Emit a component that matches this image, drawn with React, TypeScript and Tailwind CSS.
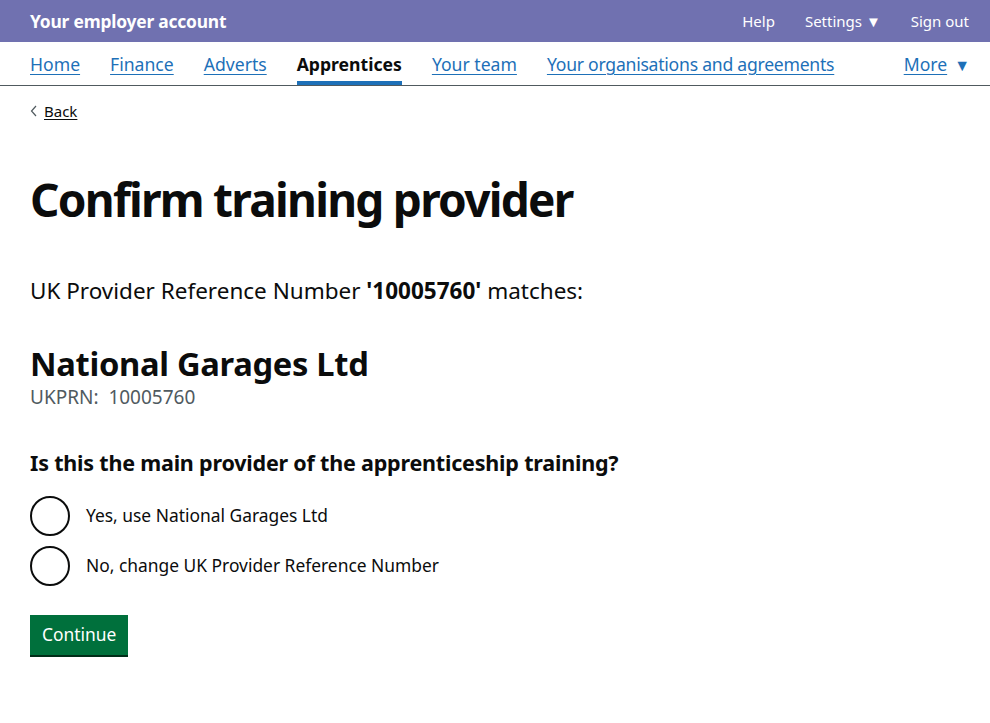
import React from "react";

export default function App() {
  const font = { fontFamily: '"Noto Sans", Arial, sans-serif' };
  return (
    <div className="min-h-screen bg-white text-[#0b0c0c]" style={font}>
      <header className="bg-[#7071b0] h-[42px] flex items-center justify-between px-[30px]">
        <span className="text-white font-bold text-[17.4px] tracking-[-0.2px]">Your employer account</span>
        <nav className="flex items-center gap-[30px] text-white text-[15px]">
          <span>Help</span>
          <span>Settings ▼</span>
          <span className="-mr-[9px]">Sign out</span>
        </nav>
      </header>
      <nav className="h-[44px] border-b border-[#505a5f] flex items-stretch justify-between px-[30px] text-[17.6px]">
        <div className="flex items-stretch gap-[30px]">
          {["Home", "Finance", "Adverts"].map((t) => (
            <a key={t} className="flex items-center pt-[2px] text-[#1d70b8] underline underline-offset-[3px]">{t}</a>
          ))}
          <a className="flex items-center pt-[2px] font-bold text-[17.6px] text-[#0b0c0c] relative">
            Apprentices
            <span className="absolute left-0 right-0 bottom-0 h-[4px] bg-[#1d70b8]" />
          </a>
          <a className="flex items-center pt-[2px] text-[#1d70b8] underline underline-offset-[3px]">Your team</a>
          <a className="flex items-center pt-[2px] text-[#1d70b8] underline underline-offset-[3px] tracking-[-0.25px]">Your organisations and agreements</a>
        </div>
        <a className="flex items-center pt-[2px] text-[#1d70b8] -mr-[10px]">
          <span className="underline underline-offset-[3px]">More</span>
          <span className="ml-[7px] text-[16px]">▼</span>
        </a>
      </nav>
      <main className="px-[30px]">
        <a className="inline-flex items-center mt-[14px] text-[15px] text-[#0b0c0c]">
          <svg width="8" height="12" viewBox="0 0 8 12" className="mr-[6px]">
            <path d="M6 1 L1.5 6 L6 11" fill="none" stroke="#505a5f" strokeWidth="1.2" />
          </svg>
          <span className="underline underline-offset-[2px]">Back</span>
        </a>
        <h1 className="mt-[51px] text-[46px] font-bold leading-[1.1] tracking-[-1.75px]">Confirm training provider</h1>
        <p className="mt-[51px] text-[22.5px] leading-[1.3]">
          UK Provider Reference Number <b>'10005760'</b> matches:
        </p>
        <h2 className="mt-[43px] text-[32.7px] font-bold leading-[1.0] tracking-[-0.3px]">National Garages Ltd</h2>
        <p className="mt-[5px] text-[19px] leading-[1.2] text-[#505a5f]">UKPRN:&nbsp; 10005760</p>
        <h3 className="mt-[40px] text-[21.5px] font-bold leading-[1.3] tracking-[-0.2px]">Is this the main provider of the apprenticeship training?</h3>
        <div className="mt-[19px] flex flex-col gap-[10px]">
          {["Yes, use National Garages Ltd", "No, change UK Provider Reference Number"].map((t) => (
            <label key={t} className="flex items-center">
              <span className="w-[40px] h-[40px] rounded-full border-2 border-[#0b0c0c] shrink-0" />
              <span className="ml-[16px] text-[17.4px]">{t}</span>
            </label>
          ))}
        </div>
        <button className="mt-[29px] h-[40px] px-[12px] bg-[#00703c] text-white text-[17.4px] shadow-[0_2px_0_#002d18]">
          Continue
        </button>
      </main>
    </div>
  );
}
